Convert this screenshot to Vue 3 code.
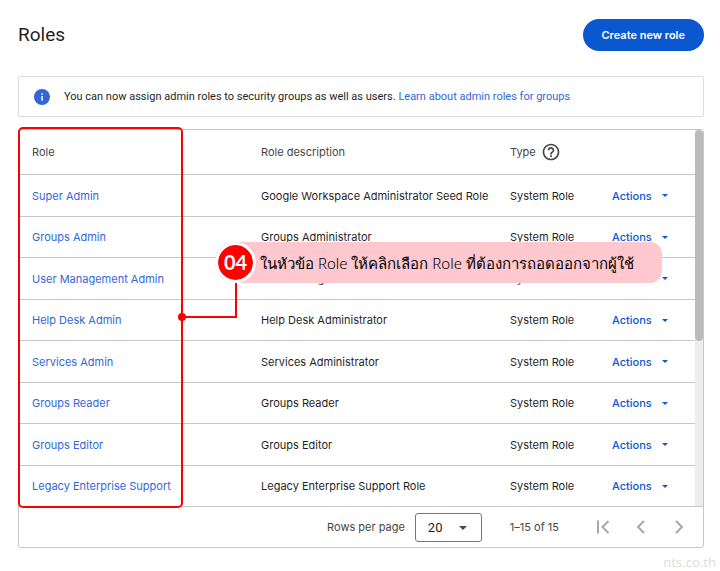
<template>
  <main class="roles-page">
    <header class="page-header">
      <h1 class="page-header__title">Roles</h1>
      <button type="button" class="create-button">Create new role</button>
    </header>

    <div class="notice">
      <svg class="notice__icon" viewBox="0 0 16 16" aria-hidden="true">
        <circle cx="8" cy="8" r="8" fill="#3367d6" />
        <path d="M7.3 4.2h1.5v1.5H7.3zM7.3 7h1.5v4.8H7.3z" fill="#fff" />
      </svg>
      <p class="notice__text">
        You can now assign admin roles to security groups as well as users.
        <a href="#groups">Learn about admin roles for groups</a>
      </p>
    </div>

    <section class="card">
      <div class="card__body">
        <table class="roles">
          <thead>
            <tr>
              <th>Role</th>
              <th class="roles__description">Role description</th>
              <th class="roles__type">
                <span class="type-label">
                  Type
                  <svg class="type-label__icon" viewBox="0 0 24 24" aria-hidden="true">
                    <path
                      fill="#444746"
                      d="M11 18h2v-2h-2v2zm1-16C6.48 2 2 6.48 2 12s4.48 10 10 10 10-4.48 10-10S17.52 2 12 2zm0 18c-4.41 0-8-3.59-8-8s3.59-8 8-8 8 3.59 8 8-3.59 8-8 8zm0-14c-2.21 0-4 1.79-4 4h2c0-1.1.9-2 2-2s2 .9 2 2c0 2-3 1.75-3 5h2c0-2.25 3-2.5 3-5 0-2.21-1.79-4-4-4z"
                    />
                  </svg>
                </span>
              </th>
              <th class="roles__actions" aria-label="Actions"></th>
            </tr>
          </thead>
          <tbody>
            <tr v-for="role in roles" :key="role.name">
              <td><a href="#role">{{ role.name }}</a></td>
              <td>{{ role.description }}</td>
              <td>System Role</td>
              <td>
                <button type="button" class="actions-button">
                  Actions
                  <svg class="actions-button__caret" viewBox="0 0 6 3" aria-hidden="true">
                    <path d="M0 0h6L3 3z" fill="currentColor" />
                  </svg>
                </button>
              </td>
            </tr>
          </tbody>
        </table>
        <div class="scrollbar">
          <div class="scrollbar__thumb"></div>
        </div>

        <div class="highlight"></div>
        <div class="connector"></div>
        <div class="callout">
          <span class="callout__number">04</span>
          <span class="callout__text">ในหัวข้อ Role ให้คลิกเลือก Role ที่ต้องการถอดออกจากผู้ใช้</span>
        </div>
      </div>

      <footer class="pager">
        <label for="rows-per-page">Rows per page</label>
        <span class="pager__select">
          <select id="rows-per-page" v-model="rowsPerPage">
            <option>20</option>
            <option>30</option>
            <option>50</option>
          </select>
          <svg class="pager__caret" viewBox="0 0 8 4" aria-hidden="true">
            <path d="M0 0h8L4 4z" fill="#444746" />
          </svg>
        </span>
        <span class="pager__range">1–15 of 15</span>
        <nav class="pager__nav">
          <button v-for="step in steps" :key="step.label" type="button" :aria-label="step.label">
            <svg viewBox="0 0 14 14" aria-hidden="true">
              <path :d="step.path" fill="none" stroke="#a8a8a8" stroke-width="2" />
            </svg>
          </button>
        </nav>
      </footer>
    </section>

    <p class="watermark">nts.co.th</p>
  </main>
</template>

<script setup>
import { ref } from 'vue'

const rowsPerPage = ref('20')

const roles = [
  { name: 'Super Admin', description: 'Google Workspace Administrator Seed Role' },
  { name: 'Groups Admin', description: 'Groups Administrator' },
  { name: 'User Management Admin', description: 'User Management Administrator' },
  { name: 'Help Desk Admin', description: 'Help Desk Administrator' },
  { name: 'Services Admin', description: 'Services Administrator' },
  { name: 'Groups Reader', description: 'Groups Reader' },
  { name: 'Groups Editor', description: 'Groups Editor' },
  { name: 'Legacy Enterprise Support', description: 'Legacy Enterprise Support Role' },
]

const steps = [
  { label: 'First page', path: 'M2 0.5v13M12.5 1l-6 6l6 6' },
  { label: 'Previous page', path: 'M10 1L4 7l6 6' },
  { label: 'Next page', path: 'M4 1l6 6l-6 6' },
]
</script>

<style>
body {
  margin: 0;
  background: #fff;
}
</style>

<style scoped>
.roles-page {
  padding: 19px 16px 0 18px;
  font-family: Roboto, "Liberation Sans", sans-serif;
  font-size: 11px;
  line-height: 16px;
  color: #1f1f1f;
}

a {
  color: #3367d6;
  text-decoration: none;
}

button {
  padding: 0;
  border: 0;
  background: none;
  font: inherit;
  cursor: pointer;
}

.page-header {
  display: flex;
  justify-content: space-between;
  align-items: center;
}

.page-header__title {
  margin: 0;
  font-size: 19px;
  line-height: 24px;
  font-weight: 400;
}

.create-button {
  height: 32px;
  padding: 0 19px;
  border-radius: 16px;
  background: #0b57d0;
  color: #fff;
  font-family: Inter, sans-serif;
  font-weight: 600;
}

.notice {
  display: flex;
  align-items: center;
  gap: 14px;
  box-sizing: border-box;
  height: 41px;
  margin: 25px 0 12px;
  padding: 0 15px;
  border: 1px solid #dadce0;
  border-radius: 2px;
}

.notice__icon {
  width: 16px;
  height: 16px;
}

.notice__text {
  margin: 0;
}

.card {
  border: 1px solid #c4c7c5;
  border-radius: 3px;
}

.card__body {
  position: relative;
  display: flex;
}

.roles {
  flex: 1;
  table-layout: fixed;
  border-collapse: separate;
  border-spacing: 0;
  font-family: Inter, sans-serif;
}

.roles th,
.roles td {
  box-sizing: border-box;
  height: 42px;
  padding: 0 0 0 13px;
  border-bottom: 1px solid #c4c7c5;
  text-align: left;
}

.roles th {
  height: 45px;
  font-weight: 400;
  color: #444746;
}

.roles tr:nth-child(even) td {
  height: 41px;
}

.roles__description {
  width: 249px;
}

.roles__type {
  width: 102px;
}

.roles__actions {
  width: 96px;
}

.type-label {
  display: flex;
  align-items: center;
  gap: 5px;
}

.type-label__icon {
  width: 20px;
  height: 20px;
}

.actions-button {
  display: flex;
  align-items: center;
  gap: 10px;
  color: #0b57d0;
  font-weight: 500;
}

.actions-button__caret {
  width: 6px;
  height: 3px;
}

.scrollbar {
  width: 8px;
  border-bottom: 1px solid #c4c7c5;
  background: #ededed;
}

.scrollbar__thumb {
  height: 56%;
  border-radius: 4px;
  background: #bababa;
}

/* Step annotation laid over the table */
.highlight {
  position: absolute;
  top: -3px;
  bottom: -1px;
  left: -1px;
  width: 161px;
  border: 2px solid #f00;
  border-radius: 5px;
}

.connector {
  position: absolute;
  top: 153px;
  left: 163px;
  width: 53px;
  height: 33px;
  border: solid #f00;
  border-width: 0 2px 2px 0;
}

.connector::before {
  content: "";
  position: absolute;
  bottom: -5px;
  left: -4px;
  width: 8px;
  height: 8px;
  border-radius: 50%;
  background: #f00;
}

.callout {
  position: absolute;
  top: 112px;
  left: 196px;
  display: flex;
  align-items: center;
  gap: 4px;
  height: 41px;
  padding-right: 28px;
  border-radius: 20px 12px 12px 20px;
  background: #ffc7ce;
  color: #000;
  white-space: nowrap;
}

.callout__number {
  width: 35px;
  border: 3px solid #fff;
  border-radius: 50%;
  background: #f00;
  background-clip: padding-box;
  color: #fff;
  font-family: Lato, sans-serif;
  font-size: 20px;
  font-weight: 700;
  line-height: 35px;
  text-align: center;
}

.callout__text {
  font-family: "Noto Sans", sans-serif;
  font-size: 15px;
  font-weight: 300;
}

.pager {
  display: flex;
  align-items: center;
  justify-content: flex-end;
  height: 40px;
  padding-right: 17px;
  color: #444746;
}

.pager__select {
  position: relative;
  margin: 0 28px 0 10px;
}

.pager__select select {
  display: block;
  width: 67px;
  height: 29px;
  padding: 0 12px;
  border: 1px solid #747775;
  border-radius: 3px;
  background: #fff;
  appearance: none;
  color: #1f1f1f;
  font: 13px Roboto, sans-serif;
}

.pager__caret {
  position: absolute;
  top: 13px;
  right: 15px;
  width: 8px;
  height: 4px;
  pointer-events: none;
}

.pager__range,
.pager label {
  font-family: Inter, sans-serif;
}

.pager__nav {
  display: flex;
  gap: 24px;
  margin-left: 37px;
}

.pager__nav svg {
  display: block;
  width: 14px;
  height: 14px;
}

.watermark {
  margin: 6px -12px 0 0;
  font-family: "Noto Sans", sans-serif;
  font-size: 13px;
  color: #dedede;
  text-align: right;
}
</style>
